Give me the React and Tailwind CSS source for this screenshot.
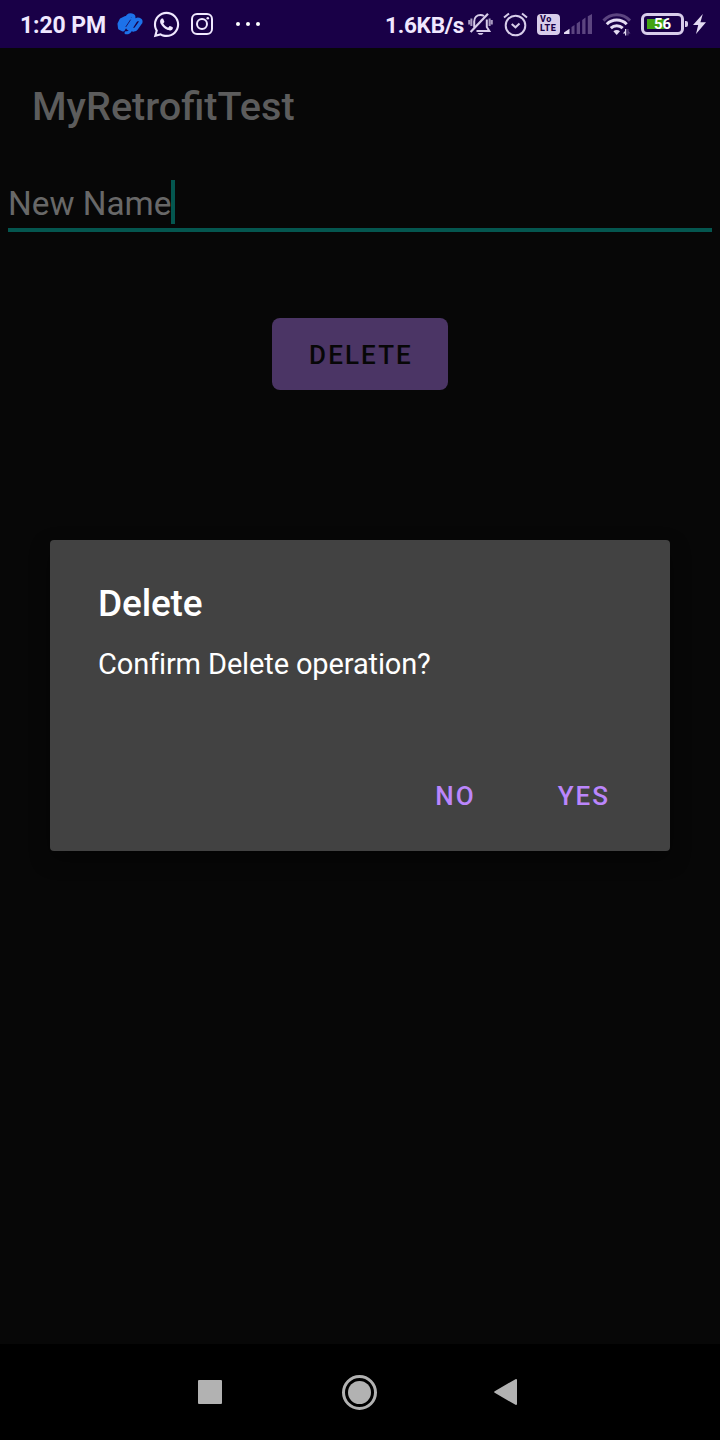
import React from "react";
import { FaWhatsapp } from "react-icons/fa";

function SwirlIcon() {
  return (
    <svg className="ml-[11px] h-[22px] w-[26px] shrink-0" viewBox="0 0 26 22" fill="none" stroke="#1d72ea" strokeLinecap="round" strokeLinejoin="round">
      <path d="M4.5 7 L2.5 11 L3 15 L6 16.5 L12.5 5.5 L8.5 5 Z" fill="#1d72ea" strokeWidth="4" />
      <path d="M11 3.2 C13 1.5 17 2 16.5 4.8 L11 13 C9.8 15.5 12.6 17 14.2 14.3 L18 8.2 C20 5 24.6 6.5 23.5 9.5 L19.2 15.5 C18.2 17 17 16.6 16.2 16.8" strokeWidth="3.8" />
      <path d="M9 19.8 C11.5 20 12.8 18.6 13.6 17.2" strokeWidth="3" />
      <path d="M13.4 7 L9 13.6" stroke="#190047" strokeWidth=".8" />
    </svg>
  );
}

function InstagramIcon() {
  return (
    <svg className="h-[22px] w-[22px] shrink-0" viewBox="0 0 22 22" fill="none" stroke="#f0e8ff" strokeWidth="2">
      <rect x="1" y="1" width="20" height="20" rx="5" />
      <circle cx="11" cy="11" r="5" />
      <circle cx="16.8" cy="5.2" r="1.3" fill="#f0e8ff" stroke="none" />
    </svg>
  );
}

function BellOffIcon() {
  return (
    <svg className="h-[24px] w-[25px] shrink-0" viewBox="0 0 25 24" fill="none" stroke="#d8cdea" strokeWidth="2">
      <path d="M18.8 7.5 V15 L21.3 19 H8.5 M6.2 15.5 V9.5 C6.2 5.5 9 3 12.5 3 C14 3 15 3.4 16 4" />
      <path d="M2.6 20 L20 1.8" strokeWidth="2.2" />
      <path d="M9.5 21 H15.5 L14 22.8 H11 Z" fill="#d8cdea" stroke="none" />
      <path d="M3.4 6.5 V14 M1.2 8 V12.5 M21.6 6.5 V14 M23.8 8 V12.5" strokeWidth="2" opacity=".75" />
    </svg>
  );
}

function AlarmIcon() {
  return (
    <svg className="ml-[10px] h-[25px] w-[25px] shrink-0" viewBox="0 0 25 25" fill="none" stroke="#d8cdea" strokeWidth="2">
      <circle cx="12.5" cy="13.5" r="9.8" />
      <path d="M1 5.5 L6 1.5 M19 1.5 L24 5.5" />
      <path d="M8.7 12 L12.5 15.3 L16.5 11.5" />
    </svg>
  );
}

function SignalIcon() {
  return (
    <svg className="ml-1 h-[20px] w-[28px] shrink-0" viewBox="0 0 28 20" fill="#5c4580">
      <path d="M0 20 V18.5 L5.5 14.7 V20 Z" fill="#e4dcf2" />
      <path d="M7.5 20 V13 L10.5 11 V20 Z M12.7 20 V9.5 L16 7.2 V20 Z M18.2 20 V6 L21.5 3.5 V20 Z M23.8 20 V2.3 L28 0 V20 Z" />
    </svg>
  );
}

function WifiIcon() {
  return (
    <svg className="mt-px ml-[10px] h-[23px] w-[30px] shrink-0" viewBox="0 0 30 23" fill="none" strokeWidth="3">
      <path d="M1.5 7.6 C9 -0.3 20.5 -0.3 28 7.6" stroke="#5c4580" />
      <path d="M4.8 11.2 C10.3 5.6 19.2 5.6 24.7 11.2 M8.8 15.2 C12.2 12 17.3 12 20.7 15.2" stroke="#e4dcf2" />
      <path d="M14.7 22 L11.4 18.2 C13.2 16.6 16.2 16.6 18 18.2 Z" fill="#e4dcf2" />
      <path d="M24.3 16 V22.5 H23 V20.5 H20.8 L23 18 V16 Z" fill="#e4dcf2" />
      <path d="M25.3 16 V22.5 H26.5 V20.5 H28.5 L26.5 18 V16 Z" fill="#5c4580" />
    </svg>
  );
}

function StatusBar() {
  return (
    <header className="flex h-12 w-full items-center bg-[#190047] pl-[20px] text-[#f0e8ff]">
      <span className="w-[86px] shrink-0 pt-[2px] whitespace-nowrap text-[23px] leading-none font-bold tracking-[-0.1px]">1:20 PM</span>
      <SwirlIcon />
      <FaWhatsapp className="ml-[9px] h-[29px] w-[29px] shrink-0 text-[#f0e8ff]" />
      <div className="ml-[10px] flex"><InstagramIcon /></div>
      <div className="ml-[23px] flex gap-[6px]">
        <i className="size-1 rounded-full bg-white" />
        <i className="size-1 rounded-full bg-white" />
        <i className="size-1 rounded-full bg-white" />
      </div>
      <div className="ml-auto flex items-center pr-[14px]">
        <span className="mr-[4px] w-[79px] shrink-0 pt-[2px] whitespace-nowrap text-[22.5px] leading-none font-bold tracking-[-0.25px]">1.6KB/s</span>
        <BellOffIcon />
        <AlarmIcon />
        <div className="ml-[9px] flex h-[21px] w-[23px] shrink-0 flex-col justify-center rounded-[4px] bg-[#d8cdea] pl-[3px] text-[9px] leading-[9px] font-extrabold tracking-[0.6px] text-[#190047]">
          <span>Vo</span>
          <span>LTE</span>
        </div>
        <SignalIcon />
        <WifiIcon />
        <div className="ml-[9px] flex h-[22px] w-[43px] shrink-0 items-center rounded-[6px] border-[3px] border-[#d8cdea] bg-[linear-gradient(#43a313,#43a313)] bg-[length:18px_10px] bg-[position:3px_3px] bg-no-repeat">
          <span className="w-full text-center text-[15px] leading-none font-bold text-white">56</span>
        </div>
        <i className="ml-[1px] h-[6px] w-[3px] rounded-r-[2px] bg-[#d8cdea]" />
        <svg className="ml-[5px] h-[20px] w-[13px] shrink-0" viewBox="0 0 13 20" fill="#e4dcf2">
          <path d="M9.8 0 L0 11 H5.2 L3 20 L13 8.2 H7.4 Z" />
        </svg>
      </div>
    </header>
  );
}

function ConfirmDialog() {
  return (
    <section role="dialog" className="mx-[50px] mt-[150px] flex h-[311px] flex-col rounded-[4px] bg-[#424242] px-12 pt-[42px] shadow-[0_8px_20px_rgba(0,0,0,0.4)]">
      <h2 className="text-[37px] leading-[44px] font-medium tracking-[-0.15px] text-white">Delete</h2>
      <p className="mt-[20px] text-[29px] leading-[36px] tracking-[-0.13px] text-white">Confirm Delete operation?</p>
      <div className="mt-[96px] flex justify-end gap-[82px] pr-[12px] text-[26px] leading-[36px] font-medium tracking-[2px] text-[#bb86fc]">
        <button>NO</button>
        <button>YES</button>
      </div>
    </section>
  );
}

function NavigationBar() {
  return (
    <nav className="mt-auto flex h-24 w-full items-center bg-black pl-[198px]">
      <i className="size-6 rounded-[1px] bg-[#b2b2b2]" />
      <div className="ml-[120px] flex size-[35px] items-center justify-center rounded-full border-[3px] border-[#b2b2b2]">
        <i className="size-[23px] rounded-full bg-[#b2b2b2]" />
      </div>
      <svg className="ml-[117px] h-[26px] w-[23px]" viewBox="0 0 23 26">
        <path d="M1.2 13 L22 1 V25 Z" fill="#b2b2b2" stroke="#b2b2b2" strokeWidth="2" strokeLinejoin="round" />
      </svg>
    </nav>
  );
}

export default function App() {
  return (
    <div className="flex h-[1440px] w-[720px] flex-col overflow-hidden bg-[#070707] font-['Roboto',sans-serif]">
      <StatusBar />
      <h1 className="mt-[35px] pl-8 text-[39.6px] leading-[48px] font-medium text-[#5c5c5c]">MyRetrofitTest</h1>
      <div className="mx-2 mt-[49px] flex h-[52px] items-start border-b-4 border-[#04564f]">
        <span className="w-[163px] whitespace-nowrap text-[33.3px] leading-[48px] text-[#686868]">New Name</span>
        <i className="h-[44px] w-1 bg-[#04564f]" />
      </div>
      <button className="mt-[86px] h-[72px] w-[176px] self-center rounded-[8px] bg-[#4b3565] pt-[2px] pl-[2px] text-[26px] font-medium tracking-[2.1px] text-[#070707]">DELETE</button>
      <ConfirmDialog />
      <NavigationBar />
    </div>
  );
}
